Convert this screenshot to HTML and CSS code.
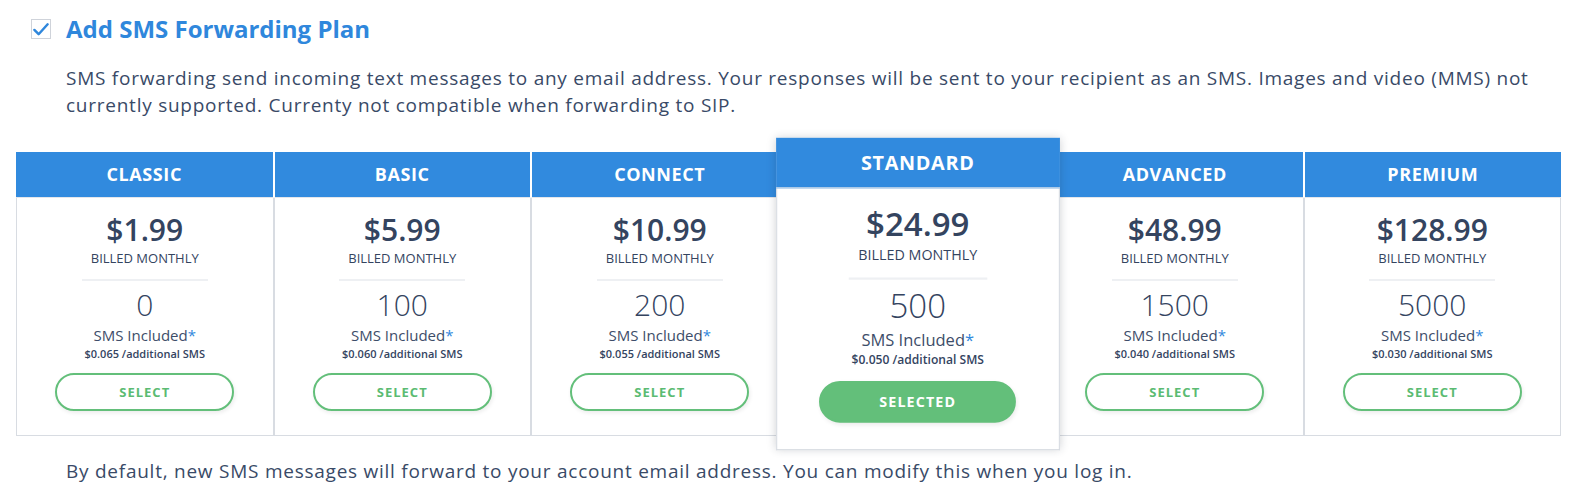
FILE: index.html
```html
<!DOCTYPE html>
<html>
<head>
<meta charset="utf-8">
<link rel="stylesheet" href="styles.css">
</head>
<body>
<div class="section">
  <div class="title-row">
    <span class="checkbox">
      <svg width="19" height="19" viewBox="0 0 19 19"><path d="M2.5 10 L7 14.5 L16.5 4" fill="none" stroke="#2f87dc" stroke-width="2.6" stroke-linecap="round" stroke-linejoin="round"/></svg>
    </span>
    <h2 class="title">Add SMS Forwarding Plan</h2>
  </div>
  <p class="desc">SMS forwarding send incoming text messages to any email address. Your responses will be sent to your recipient as an SMS. Images and video (MMS) not currently supported. Currenty not compatible when forwarding to SIP.</p>

  <div class="plans">
    <div class="plan">
      <div class="plan-head">CLASSIC</div>
      <div class="plan-body">
        <div class="price">$1.99</div>
        <div class="billed">BILLED MONTHLY</div>
        <div class="divider"></div>
        <div class="count">0</div>
        <div class="included">SMS Included<span class="star">*</span></div>
        <div class="extra">$0.065 /additional SMS</div>
        <button class="btn">SELECT</button>
      </div>
    </div>
    <div class="plan">
      <div class="plan-head">BASIC</div>
      <div class="plan-body">
        <div class="price">$5.99</div>
        <div class="billed">BILLED MONTHLY</div>
        <div class="divider"></div>
        <div class="count">100</div>
        <div class="included">SMS Included<span class="star">*</span></div>
        <div class="extra">$0.060 /additional SMS</div>
        <button class="btn">SELECT</button>
      </div>
    </div>
    <div class="plan">
      <div class="plan-head">CONNECT</div>
      <div class="plan-body">
        <div class="price">$10.99</div>
        <div class="billed">BILLED MONTHLY</div>
        <div class="divider"></div>
        <div class="count">200</div>
        <div class="included">SMS Included<span class="star">*</span></div>
        <div class="extra">$0.055 /additional SMS</div>
        <button class="btn">SELECT</button>
      </div>
    </div>
    <div class="plan plan-selected">
      <div class="plan-head">STANDARD</div>
      <div class="plan-body">
        <div class="price">$24.99</div>
        <div class="billed">BILLED MONTHLY</div>
        <div class="divider"></div>
        <div class="count">500</div>
        <div class="included">SMS Included<span class="star">*</span></div>
        <div class="extra">$0.050 /additional SMS</div>
        <button class="btn btn-selected">SELECTED</button>
      </div>
    </div>
    <div class="plan">
      <div class="plan-head">ADVANCED</div>
      <div class="plan-body">
        <div class="price">$48.99</div>
        <div class="billed">BILLED MONTHLY</div>
        <div class="divider"></div>
        <div class="count">1500</div>
        <div class="included">SMS Included<span class="star">*</span></div>
        <div class="extra">$0.040 /additional SMS</div>
        <button class="btn">SELECT</button>
      </div>
    </div>
    <div class="plan">
      <div class="plan-head">PREMIUM</div>
      <div class="plan-body">
        <div class="price">$128.99</div>
        <div class="billed">BILLED MONTHLY</div>
        <div class="divider"></div>
        <div class="count">5000</div>
        <div class="included">SMS Included<span class="star">*</span></div>
        <div class="extra">$0.030 /additional SMS</div>
        <button class="btn">SELECT</button>
      </div>
    </div>
  </div>

  <p class="note">By default, new SMS messages will forward to your account email address. You can modify this when you log in.</p>
</div>
</body>
</html>
```

FILE: styles.css
```css
* { box-sizing: border-box; }
html, body { margin: 0; padding: 0; background: #fff; }
body {
  font-family: "Open Sans", "Noto Sans", sans-serif;
  color: #394a67;
}
.section {
  width: 1576px;
  padding: 0 15px 0 16px;
}
.title-row {
  display: flex;
  align-items: center;
  padding-top: 18px;
  height: 40px;
}
.checkbox {
  width: 20px;
  height: 20px;
  margin-left: 15px;
  border: 1px solid #cfd3da;
  display: flex;
  align-items: center;
  justify-content: center;
}
.checkbox svg { display: block; }
.title {
  margin: 0 0 0 15px;
  font-size: 24px;
  font-weight: 700;
  color: #2f87dc;
  line-height: 30px;
}
.desc {
  margin: 25px 0 0 50px;
  font-size: 19px;
  font-weight: 500;
  letter-spacing: 0.75px;
  line-height: 27px;
  color: #394a67;
}
.plans {
  display: grid;
  grid-template-columns: repeat(6, 1fr);
  margin-top: 33px;
}
.plan {
  background: #fff;
  border: 1px solid #d8dce2;
  border-top: none;
  text-align: center;
}
.plan-head {
  height: 46px;
  margin: 0 -1px;
  background: #318ade;
  border-left: 1px solid #fff;
  border-right: 1px solid #fff;
  border-bottom: 1px solid #e3e6eb;
  color: #fff;
  font-size: 18px;
  font-weight: 700;
  letter-spacing: 0.6px;
  line-height: 45px;
}
.plan:first-child .plan-head { border-left: none; margin-left: -1px; }
.plan:last-child .plan-head { border-right: none; }
.plan-body {
  padding: 15px 0 24px;
  display: flex;
  flex-direction: column;
  align-items: center;
}
.price {
  font-size: 30px;
  font-weight: 600;
  line-height: 34px;
  color: #34445f;
}
.billed {
  margin-top: 3px;
  font-size: 13px;
  line-height: 16px;
  color: #34445f;
}
.divider {
  margin-top: 13px;
  width: 126px;
  height: 2px;
  background: #eef0f3;
}
.count {
  margin-top: 7px;
  font-size: 30px;
  font-weight: 300;
  line-height: 34px;
  color: #34445f;
}
.included {
  margin-top: 3px;
  font-size: 15px;
  line-height: 20px;
  color: #3d4d69;
}
.star { color: #2f87dc; }
.extra {
  margin-top: 2px;
  font-size: 11px;
  font-weight: 600;
  line-height: 14px;
  color: #34445f;
}
.btn {
  margin-top: 12px;
  width: 179px;
  height: 38px;
  border: 2px solid #63bf7a;
  border-radius: 20px;
  background: #fff;
  color: #5bbb72;
  font-family: "Open Sans", "Noto Sans", sans-serif;
  font-size: 13px;
  font-weight: 700;
  letter-spacing: 1px;
  box-shadow: 1px 2px 4px rgba(0, 0, 0, 0.08);
  cursor: pointer;
}
.btn-selected {
  background: #63bf7a;
  color: #fff;
}
.plan-selected {
  position: relative;
  z-index: 2;
  transform: scale(1.1);
  box-shadow: 0 0 8px rgba(30, 40, 60, 0.22);
  border-color: #d8dce2;
}
.plan-selected .plan-head { border-left: none; border-right: none; margin: 0 -1px; }
.note {
  margin: 22px 0 0 50px;
  font-size: 19px;
  font-weight: 500;
  letter-spacing: 0.75px;
  line-height: 27px;
  color: #394a67;
}
```
